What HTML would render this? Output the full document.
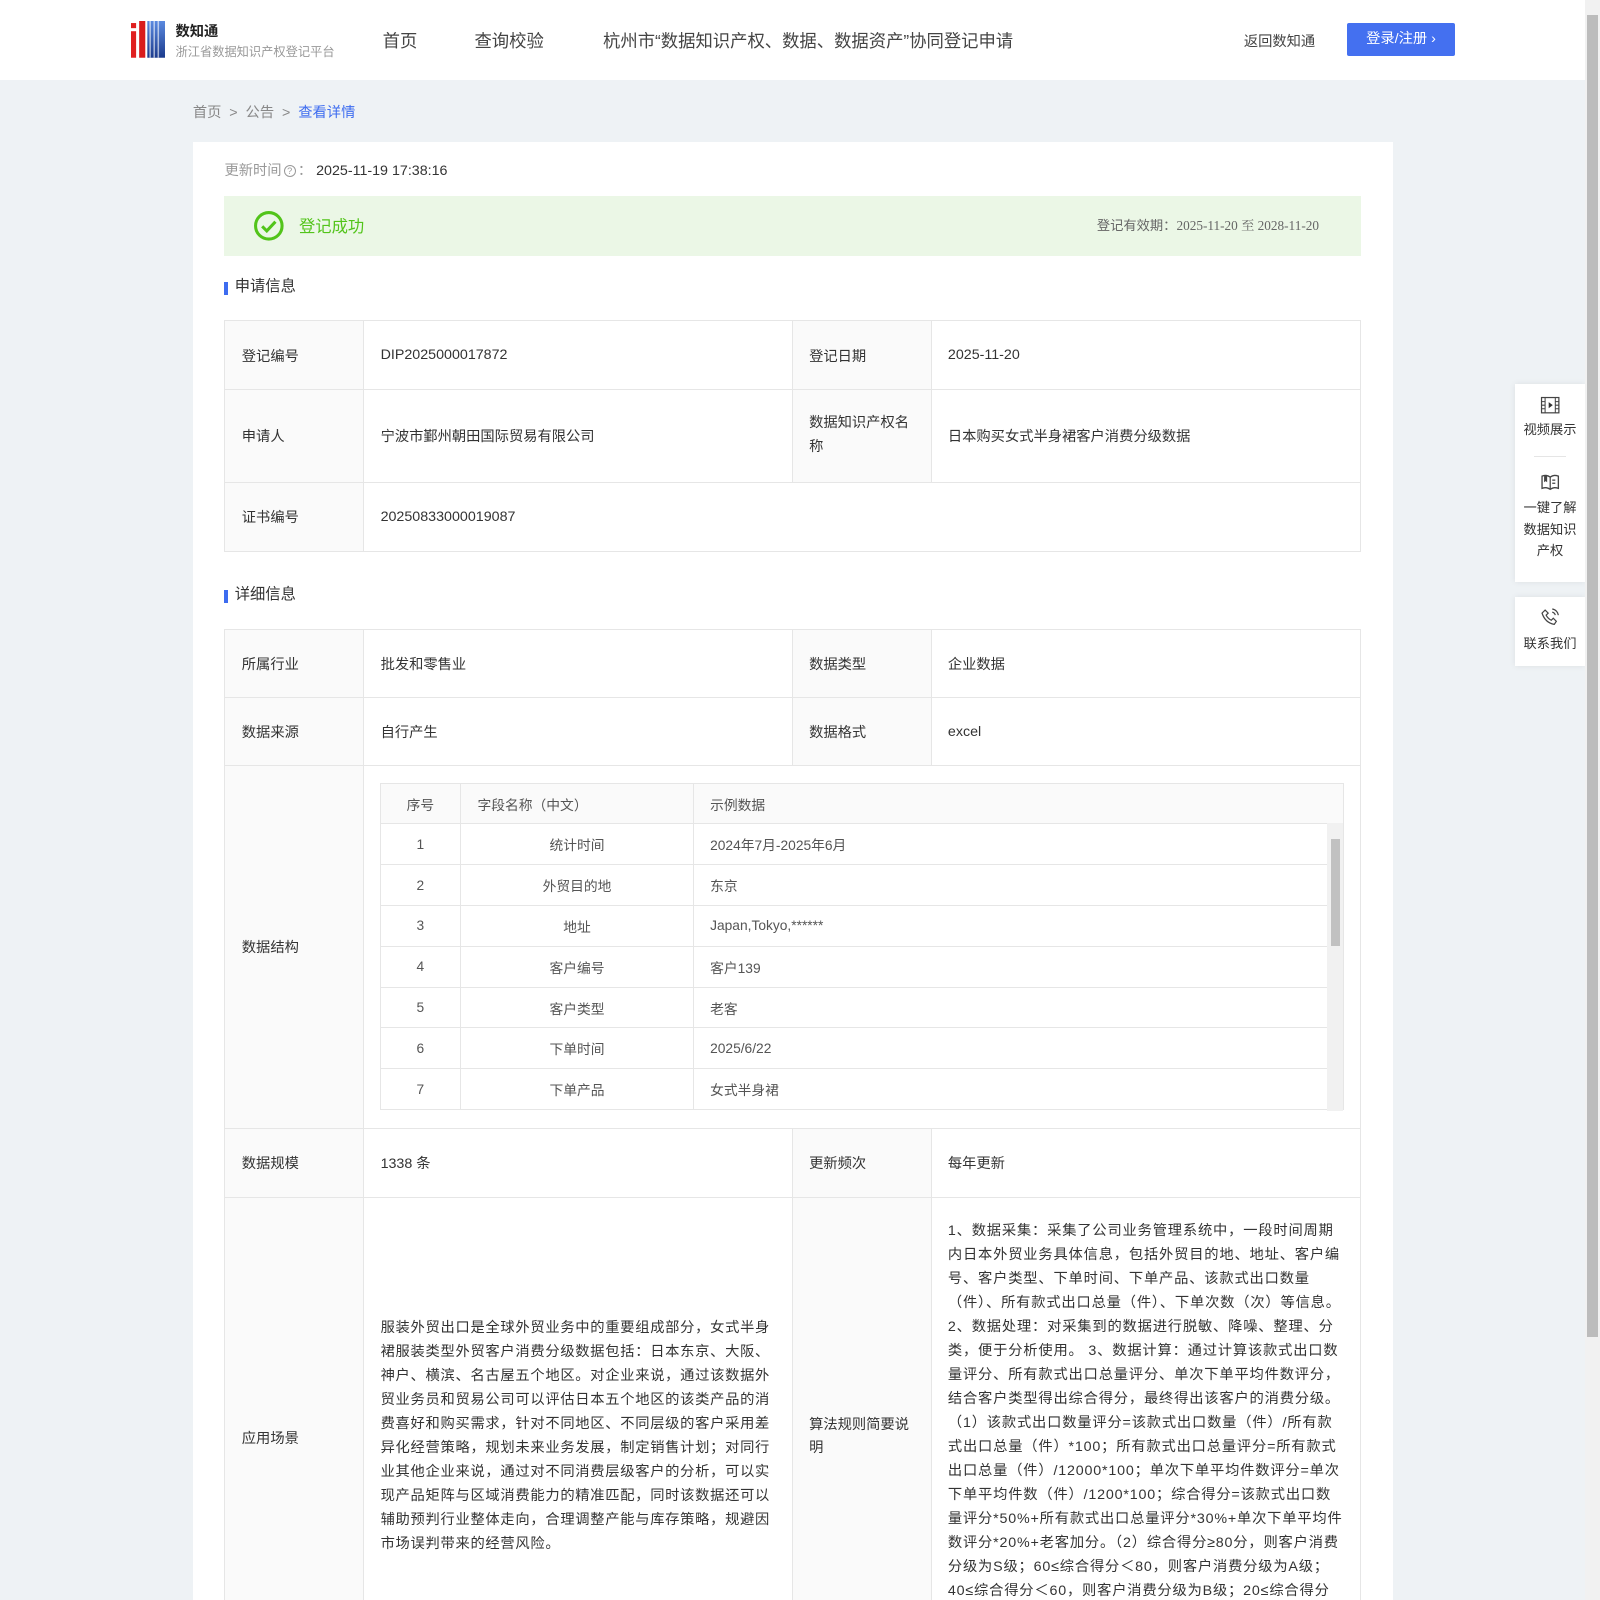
<!DOCTYPE html>
<html style="width:1600px;height:1600px;overflow:hidden"><head><meta charset="utf-8"><style>
*{margin:0;padding:0;box-sizing:border-box}
body{width:1600px;height:1600px;overflow:hidden;background:#eef2f5;font-family:"Liberation Sans","Noto Sans CJK SC",sans-serif;color:#333}
#w{position:relative;width:1568px;height:1568px;overflow:hidden;zoom:1.0204}
.hdr{position:absolute;left:0;top:0;width:1553px;height:78px;background:#fff}
.abs{position:absolute}
.sb{position:absolute;left:1553px;top:0;width:15px;height:1568px;background:#f1f1f1}
.sb .th{position:absolute;left:2px;top:15px;width:11px;height:1295px;background:#bcbcbc}
.card{position:absolute;left:189px;top:139px;width:1176px;height:1461px;background:#fff}
table.t{position:absolute;left:220px;width:1114px;border-collapse:collapse;font-size:14px;color:#333}
table.t td{border:1px solid #e6e6e6;padding:0 16px;vertical-align:middle}
table.t td.l{background:#fafafa;width:136px}
.sec{position:absolute;left:220px;font-size:15px;color:#333;padding-left:10px;line-height:18px}
.sec:before{content:"";position:absolute;left:0;top:4px;width:3px;height:13px;background:#3d6cf0}
.inner{border-collapse:collapse;width:945px;font-size:13.5px;color:#555}
.inner td{border:1px solid #e6e6e6;height:40px;padding:0 12px}
.side{position:absolute;left:1485px;background:#fff;box-shadow:0 0 6px rgba(0,0,0,.08);width:68px;font-size:13px;color:#333;text-align:center;line-height:21px}
.long{line-height:23.5px;font-size:14px;letter-spacing:.7px}
</style></head><body><div id="w">
<div class="hdr">
 <svg class="abs" style="left:128px;top:21px" width="34" height="36" viewBox="0 0 34 36">
  <defs><linearGradient id="b" x1="0" y1="0" x2="0" y2="1"><stop offset="0" stop-color="#5b8ae0"/><stop offset="1" stop-color="#1b3a8c"/></linearGradient></defs>
  <rect x="0" y="2" width="5" height="5" fill="#e02020"/><rect x="0" y="10" width="5" height="26" fill="#e02020"/>
  <rect x="8" y="0" width="6" height="36" fill="#d91c1c"/>
  <rect x="16" y="0" width="18" height="36" fill="url(#b)"/>
  <rect x="18" y="0" width="1.5" height="36" fill="#fff" opacity=".6"/><rect x="22" y="0" width="1.5" height="36" fill="#fff" opacity=".6"/><rect x="26" y="0" width="1.5" height="36" fill="#fff" opacity=".6"/>
 </svg>
 <div class="abs" style="left:172px;top:20px;font-size:14px;color:#222;font-weight:bold">数知通</div>
 <div class="abs" style="left:172px;top:41px;font-size:12px;color:#999">浙江省数据知识产权登记平台</div>
 <div class="abs" style="left:375px;top:26px;font-size:17px;color:#444">首页</div>
 <div class="abs" style="left:465px;top:26px;font-size:17px;color:#444">查询校验</div>
 <div class="abs" style="left:591px;top:26px;font-size:17px;color:#444">杭州市“数据知识产权、数据、数据资产”协同登记申请</div>
 <div class="abs" style="left:1219px;top:29px;font-size:14px;color:#444">返回数知通</div>
 <div class="abs" style="left:1320px;top:23px;width:106px;height:32px;background:#4470f0;border-radius:2px;color:#fff;font-size:14px;line-height:32px;text-align:center">登录/注册 ›</div>
</div>
<div class="abs" style="left:189px;top:99px;font-size:14px;color:#888">首页 &nbsp;&gt;&nbsp; 公告 &nbsp;&gt;&nbsp; <span style="color:#3d6cf0">查看详情</span></div>
<div class="card"></div>
<div class="abs" style="left:220px;top:156px;font-size:14px;color:#999">更新时间<span style="display:inline-block;width:12px;height:12px;border:1px solid #999;border-radius:50%;font-size:9px;line-height:10px;text-align:center;vertical-align:1px;margin:0 2px">?</span>： <span style="color:#333">2025-11-19 17:38:16</span></div>
<div class="abs" style="left:220px;top:192px;width:1114px;height:59px;background:#ebf7e6"></div>
<svg class="abs" style="left:248px;top:206px" width="31" height="31" viewBox="0 0 31 31"><circle cx="15.5" cy="15.5" r="13" fill="none" stroke="#52c41a" stroke-width="3"/><path d="M9 16l4.5 4.5L22 11.5" fill="none" stroke="#52c41a" stroke-width="3"/></svg>
<div class="abs" style="left:293px;top:209px;font-size:16px;color:#52c41a">登记成功</div>
<div class="abs" style="left:1075px;top:211px;font-size:13px;color:#666">登记有效期：<span style="font-family:'Liberation Serif','Noto Serif CJK SC',serif">2025-11-20 至 2028-11-20</span></div>
<div class="sec" style="top:272px">申请信息</div>
<table class="t" style="top:314px">
<tr style="height:67px"><td class="l">登记编号</td><td style="width:420px">DIP2025000017872</td><td class="l" style="width:135px">登记日期</td><td>2025-11-20</td></tr>
<tr style="height:91px"><td class="l">申请人</td><td>宁波市鄞州朝田国际贸易有限公司</td><td class="l" style="line-height:23px">数据知识产权名称</td><td>日本购买女式半身裙客户消费分级数据</td></tr>
<tr style="height:68px"><td class="l">证书编号</td><td colspan="3">20250833000019087</td></tr>
</table>
<div class="sec" style="top:574px">详细信息</div>
<table class="t" style="top:616px">
<tr style="height:67px"><td class="l">所属行业</td><td style="width:420px">批发和零售业</td><td class="l" style="width:135px">数据类型</td><td>企业数据</td></tr>
<tr style="height:67px"><td class="l">数据来源</td><td>自行产生</td><td class="l">数据格式</td><td>excel</td></tr>
<tr style="height:355px"><td class="l">数据结构</td><td colspan="3" style="padding:0">
 <div style="position:relative;margin-left:15px;width:946px;height:322px;overflow:hidden">
 <table class="inner">
 <tr style="background:#fafafa"><td style="width:79px;text-align:center">序号</td><td style="width:228px">字段名称（中文）</td><td>示例数据</td></tr>
 <tr><td style="text-align:center">1</td><td style="text-align:center">统计时间</td><td>2024年7月-2025年6月</td></tr>
 <tr><td style="text-align:center">2</td><td style="text-align:center">外贸目的地</td><td>东京</td></tr>
 <tr><td style="text-align:center">3</td><td style="text-align:center">地址</td><td>Japan,Tokyo,******</td></tr>
 <tr><td style="text-align:center">4</td><td style="text-align:center">客户编号</td><td>客户139</td></tr>
 <tr><td style="text-align:center">5</td><td style="text-align:center">客户类型</td><td>老客</td></tr>
 <tr><td style="text-align:center">6</td><td style="text-align:center">下单时间</td><td>2025/6/22</td></tr>
 <tr><td style="text-align:center">7</td><td style="text-align:center">下单产品</td><td>女式半身裙</td></tr>
 </table>
 <div style="position:absolute;left:929px;top:40px;width:15px;height:282px;background:#f1f1f1"><div style="position:absolute;left:3px;top:15px;width:9px;height:105px;background:#c1c1c1"></div></div>
 </div></td></tr>
<tr style="height:68px"><td class="l">数据规模</td><td>1338 条</td><td class="l">更新频次</td><td>每年更新</td></tr>
<tr style="height:470px"><td class="l">应用场景</td><td class="long">服装外贸出口是全球外贸业务中的重要组成部分，女式半身裙服装类型外贸客户消费分级数据包括：日本东京、大阪、神户、横滨、名古屋五个地区。对企业来说，通过该数据外贸业务员和贸易公司可以评估日本五个地区的该类产品的消费喜好和购买需求，针对不同地区、不同层级的客户采用差异化经营策略，规划未来业务发展，制定销售计划；对同行业其他企业来说，通过对不同消费层级客户的分析，可以实现产品矩阵与区域消费能力的精准匹配，同时该数据还可以辅助预判行业整体走向，合理调整产能与库存策略，规避因市场误判带来的经营风险。</td><td class="l" style="line-height:23px">算法规则简要说明</td><td class="long" style="vertical-align:top;padding-top:22px;letter-spacing:.8px">1、数据采集：采集了公司业务管理系统中，一段时间周期内日本外贸业务具体信息，包括外贸目的地、地址、客户编号、客户类型、下单时间、下单产品、该款式出口数量（件）、所有款式出口总量（件）、下单次数（次）等信息。 2、数据处理：对采集到的数据进行脱敏、降噪、整理、分类，便于分析使用。 3、数据计算：通过计算该款式出口数量评分、所有款式出口总量评分、单次下单平均件数评分，结合客户类型得出综合得分，最终得出该客户的消费分级。（1）该款式出口数量评分=该款式出口数量（件）/所有款式出口总量（件）*100；所有款式出口总量评分=所有款式出口总量（件）/12000*100；单次下单平均件数评分=单次下单平均件数（件）/1200*100；综合得分=该款式出口数量评分*50%+所有款式出口总量评分*30%+单次下单平均件数评分*20%+老客加分。（2）综合得分≥80分，则客户消费分级为S级；60≤综合得分＜80，则客户消费分级为A级；40≤综合得分＜60，则客户消费分级为B级；20≤综合得分</td></tr>
</table>
<div class="side" style="top:376px;height:194px">
 <svg style="margin-top:12px" width="20" height="18" viewBox="0 0 20 18"><rect x="1.5" y="1.5" width="17" height="15" fill="none" stroke="#444" stroke-width="1.2"/><path d="M5 1.5v15M15 1.5v15M1.5 5.5h3.5M1.5 9h3.5M1.5 12.5h3.5M15 5.5h3.5M15 9h3.5M15 12.5h3.5" stroke="#444" stroke-width="1"/><path d="M8.5 6v6l4-3z" fill="#333"/></svg>
 <div style="margin-top:-2px">视频展示</div>
 <div style="width:32px;height:1px;background:#e5e5e5;margin:16px auto 0"></div>
 <svg style="margin-top:14px" width="20" height="20" viewBox="0 0 20 20"><path d="M2 4c3-1 5-1 8 1 3-2 5-2 8-1v12c-3-1-5-1-8 1-3-2-5-2-8-1z" fill="none" stroke="#444" stroke-width="1.3"/><path d="M10 5v12M12 8h3M12 11h3" stroke="#444" stroke-width="1.2"/><path d="M4 4v6l1.5-1 1.5 1V3.5" fill="#444"/></svg>
 <div style="margin-top:-1px">一键了解<br>数据知识<br>产权</div>
</div>
<div class="side" style="top:585px;height:68px">
 <svg style="margin-top:10px" width="20" height="20" viewBox="0 0 20 20"><path d="M5 3l3 3-2 2c1 2 3 4 5 5l2-2 3 3-2 3C8 16 4 12 2 6z" fill="none" stroke="#444" stroke-width="1.2"/><path d="M12 5a4 4 0 0 1 3 3M12 2a7 7 0 0 1 6 6" fill="none" stroke="#444" stroke-width="1.2"/></svg>
 <div style="margin-top:-1px">联系我们</div>
</div>
<div class="sb"><div class="th"></div></div>
</div></body></html>
